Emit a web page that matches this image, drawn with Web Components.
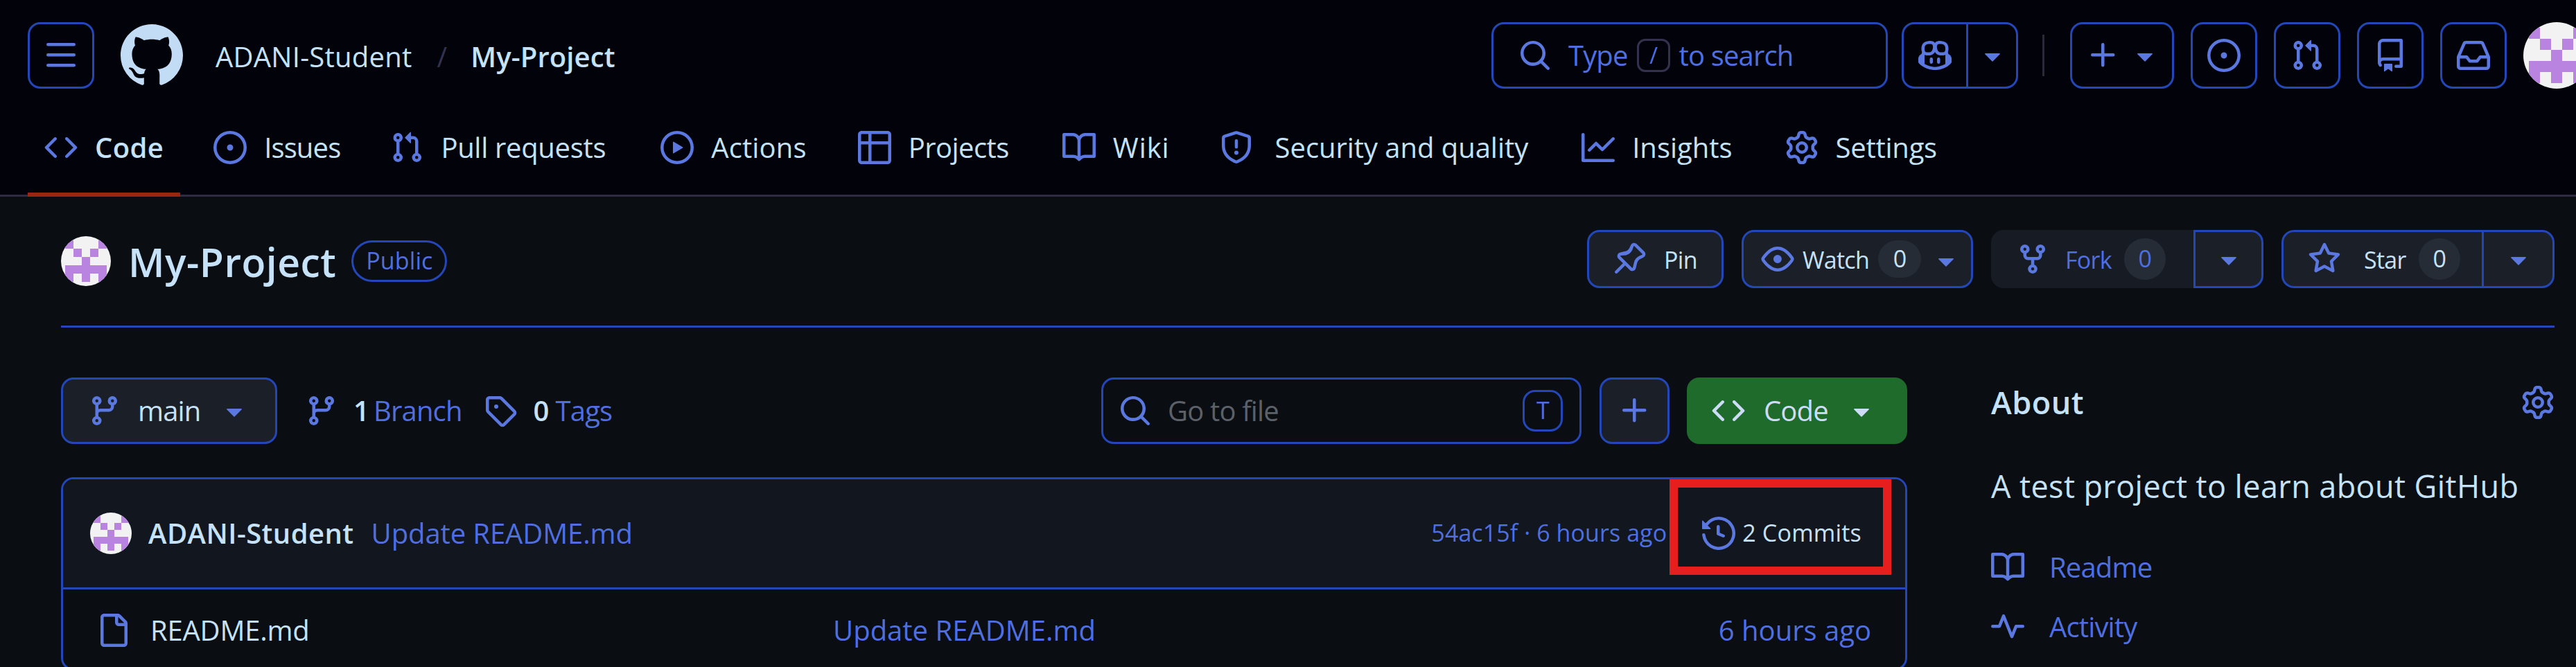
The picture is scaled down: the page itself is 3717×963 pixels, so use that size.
<!DOCTYPE html>
<html lang="en">
<head>
<meta charset="utf-8">
<title>My-Project</title>
<style>
  html, body { margin: 0; height: 100%; background: #0a0d12; overflow: hidden; }
  body {
    font: 40px/1.35 "Open Sans", "Noto Sans", sans-serif;
    letter-spacing: -0.85px;
    color: #c6e2f8;
    --blue: #4f6fe0;
    --icon: #5a78e0;
    --line: #2347b8;
    --dim: #34314f;
  }
  main-area { width: 3717px; }
</style>
</head>
<body>
<app-header></app-header>
<main-area></main-area>

<script>
// octicons, 16 unit grid
const ICONS = {
  bars: 'M1 2.75A.75.75 0 0 1 1.75 2h12.5a.75.75 0 0 1 0 1.5H1.75A.75.75 0 0 1 1 2.75Zm0 5A.75.75 0 0 1 1.75 7h12.5a.75.75 0 0 1 0 1.5H1.75A.75.75 0 0 1 1 7.75ZM1.75 12h12.5a.75.75 0 0 1 0 1.5H1.75a.75.75 0 0 1 0-1.5Z',
  github: 'M8 0c4.42 0 8 3.58 8 8a8.013 8.013 0 0 1-5.45 7.59c-.4.08-.55-.17-.55-.38 0-.27.01-1.13.01-2.2 0-.75-.25-1.23-.54-1.48 1.78-.2 3.65-.88 3.65-3.95 0-.88-.31-1.59-.82-2.15.08-.2.36-1.02-.08-2.12 0 0-.67-.22-2.2.82-.64-.18-1.32-.27-2-.27-.68 0-1.36.09-2 .27-1.53-1.03-2.2-.82-2.2-.82-.44 1.1-.16 1.92-.08 2.12-.51.56-.82 1.28-.82 2.15 0 3.06 1.86 3.75 3.64 3.95-.23.2-.44.55-.51 1.07-.46.21-1.61.55-2.33-.66-.15-.24-.6-.83-1.23-.82-.67.01-.27.38.01.53.34.19.73.9.82 1.13.16.45.68 1.31 2.69.94 0 .67.01 1.3.01 1.49 0 .21-.15.45-.55.37A7.995 7.995 0 0 1 0 8c0-4.42 3.58-8 8-8Z',
  code: 'm11.28 3.22 4.25 4.25a.75.75 0 0 1 0 1.06l-4.25 4.25a.749.749 0 0 1-1.275-.326.749.749 0 0 1 .215-.734L13.94 8l-3.72-3.72a.749.749 0 0 1 .326-1.275.749.749 0 0 1 .734.215Zm-6.56 0a.751.751 0 0 1 1.042.018.751.751 0 0 1 .018 1.042L2.06 8l3.72 3.72a.749.749 0 0 1-.326 1.275.749.749 0 0 1-.734-.215L.47 8.53a.75.75 0 0 1 0-1.06Z',
  issue: 'M8 9.5a1.5 1.5 0 1 0 0-3 1.5 1.5 0 0 0 0 3ZM8 0a8 8 0 1 1 0 16A8 8 0 0 1 8 0ZM1.5 8a6.5 6.5 0 1 0 13 0 6.5 6.5 0 0 0-13 0Z',
  pr: 'M1.5 3.25a2.25 2.25 0 1 1 3 2.122v5.256a2.251 2.251 0 1 1-1.5 0V5.372A2.25 2.25 0 0 1 1.5 3.25Zm5.677-.177L9.573.677A.25.25 0 0 1 10 .854V2.5h1A2.5 2.5 0 0 1 13.5 5v5.628a2.251 2.251 0 1 1-1.5 0V5a1 1 0 0 0-1-1h-1v1.646a.25.25 0 0 1-.427.177L7.177 3.427a.25.25 0 0 1 0-.354ZM3.75 2.5a.75.75 0 1 0 0 1.5.75.75 0 0 0 0-1.5Zm0 9.5a.75.75 0 1 0 0 1.5.75.75 0 0 0 0-1.5Zm8.25.75a.75.75 0 1 0 1.5 0 .75.75 0 0 0-1.5 0Z',
  play: 'M8 0a8 8 0 1 1 0 16A8 8 0 0 1 8 0ZM1.5 8a6.5 6.5 0 1 0 13 0 6.5 6.5 0 0 0-13 0Zm4.879-2.773 4.264 2.559a.25.25 0 0 1 0 .428l-4.264 2.559A.25.25 0 0 1 6 10.559V5.442a.25.25 0 0 1 .379-.215Z',
  table: 'M0 1.75C0 .784.784 0 1.75 0h12.5C15.216 0 16 .784 16 1.75v12.5A1.75 1.75 0 0 1 14.25 16H1.75A1.75 1.75 0 0 1 0 14.25ZM6.5 6.5v8h7.75a.25.25 0 0 0 .25-.25V6.5Zm8-1.5V1.75a.25.25 0 0 0-.25-.25H6.5V5Zm-13 1.5v7.75c0 .138.112.25.25.25H5v-8ZM5 5V1.5H1.75a.25.25 0 0 0-.25.25V5Z',
  book: 'M0 1.75A.75.75 0 0 1 .75 1h4.253c1.227 0 2.317.59 3 1.501A3.743 3.743 0 0 1 11.006 1h4.245a.75.75 0 0 1 .75.75v10.5a.75.75 0 0 1-.75.75h-4.507a2.25 2.25 0 0 0-1.591.659l-.622.621a.75.75 0 0 1-1.06 0l-.622-.621A2.25 2.25 0 0 0 5.258 13H.75a.75.75 0 0 1-.75-.75Zm7.251 10.324.004-5.073-.002-2.253A2.25 2.25 0 0 0 5.003 2.5H1.5v9h3.757a3.75 3.75 0 0 1 1.994.574ZM8.755 4.75l-.004 7.322a3.752 3.752 0 0 1 1.992-.572H14.5v-9h-3.495a2.25 2.25 0 0 0-2.25 2.25Z',
  shield: 'M7.467.133a1.748 1.748 0 0 1 1.066 0l5.25 1.68A1.75 1.75 0 0 1 15 3.48V7c0 1.566-.32 3.182-1.303 4.682-.983 1.498-2.585 2.813-5.032 3.855a1.697 1.697 0 0 1-1.33 0c-2.447-1.042-4.049-2.357-5.032-3.855C1.32 10.182 1 8.566 1 7V3.48a1.75 1.75 0 0 1 1.217-1.667Zm.61 1.429a.25.25 0 0 0-.153 0l-5.25 1.68a.25.25 0 0 0-.174.238V7c0 1.358.275 2.666 1.057 3.86.784 1.194 2.121 2.34 4.366 3.297a.196.196 0 0 0 .154 0c2.245-.956 3.582-2.104 4.366-3.298C13.225 9.666 13.5 8.36 13.5 7V3.48a.251.251 0 0 0-.174-.237l-5.25-1.68ZM8.75 4.75v3a.75.75 0 0 1-1.5 0v-3a.75.75 0 0 1 1.5 0ZM9 10.5a1 1 0 1 1-2 0 1 1 0 0 1 2 0Z',
  graph: 'M1.5 1.75V13.5h13.75a.75.75 0 0 1 0 1.5H.75a.75.75 0 0 1-.75-.75V1.75a.75.75 0 0 1 1.5 0Zm14.28 2.53-5.25 5.25a.75.75 0 0 1-1.06 0L7 7.06 4.28 9.78a.751.751 0 0 1-1.042-.018.751.751 0 0 1-.018-1.042l3.25-3.25a.75.75 0 0 1 1.06 0L10 7.94l4.72-4.72a.751.751 0 0 1 1.042.018.751.751 0 0 1 .018 1.042Z',
  gear: 'M8 0a8.2 8.2 0 0 1 .701.031C9.444.095 9.99.645 10.16 1.29l.288 1.107c.018.066.079.158.212.224.231.114.454.243.668.386.123.082.233.09.299.071l1.103-.303c.644-.176 1.392.021 1.82.63.27.385.506.792.704 1.218.315.675.111 1.422-.364 1.891l-.814.806c-.049.048-.098.147-.088.294.016.257.016.515 0 .772-.01.147.038.246.088.294l.814.806c.475.469.679 1.216.364 1.891a7.977 7.977 0 0 1-.704 1.217c-.428.61-1.176.807-1.82.63l-1.102-.302c-.067-.019-.177-.011-.3.071a5.909 5.909 0 0 1-.668.386c-.133.066-.194.158-.211.224l-.29 1.106c-.168.646-.715 1.196-1.458 1.26a8.006 8.006 0 0 1-1.402 0c-.743-.064-1.289-.614-1.458-1.26l-.289-1.106c-.018-.066-.079-.158-.212-.224a5.738 5.738 0 0 1-.668-.386c-.123-.082-.233-.09-.299-.071l-1.103.303c-.644.176-1.392-.021-1.82-.63a8.12 8.12 0 0 1-.704-1.218c-.315-.675-.111-1.422.363-1.891l.815-.806c.05-.048.098-.147.088-.294a6.214 6.214 0 0 1 0-.772c.01-.147-.038-.246-.088-.294l-.815-.806C.635 6.045.431 5.298.746 4.623a7.92 7.92 0 0 1 .704-1.217c.428-.61 1.176-.807 1.82-.63l1.102.302c.067.019.177.011.3-.071.214-.143.437-.272.668-.386.133-.066.194-.158.211-.224l.29-1.106C6.009.645 6.556.095 7.299.03 7.53.01 7.764 0 8 0Zm-.571 1.525c-.036.003-.108.036-.137.146l-.289 1.105c-.147.561-.549.967-.998 1.189-.173.086-.34.183-.5.29-.417.278-.97.423-1.529.27l-1.103-.303c-.109-.03-.175.016-.195.045-.22.312-.412.644-.573.99-.014.031-.021.11.059.19l.815.806c.411.406.562.957.53 1.456a4.709 4.709 0 0 0 0 .582c.032.499-.119 1.05-.53 1.456l-.815.806c-.081.08-.073.159-.059.19.162.346.353.677.573.989.02.03.085.076.195.046l1.102-.303c.56-.153 1.113-.008 1.53.27.161.107.328.204.501.29.447.222.85.629.997 1.189l.289 1.105c.029.109.101.143.137.146a6.6 6.6 0 0 0 1.142 0c.036-.003.108-.036.137-.146l.289-1.105c.147-.561.549-.967.998-1.189.173-.086.34-.183.5-.29.417-.278.97-.423 1.529-.27l1.103.303c.109.029.175-.016.195-.045.22-.313.411-.644.573-.99.014-.031.021-.11-.059-.19l-.815-.806c-.411-.406-.562-.957-.53-1.456a4.709 4.709 0 0 0 0-.582c-.032-.499.119-1.05.53-1.456l.815-.806c.081-.08.073-.159.059-.19a6.464 6.464 0 0 0-.573-.989c-.02-.03-.085-.076-.195-.046l-1.102.303c-.56.153-1.113.008-1.53-.27a4.44 4.44 0 0 0-.501-.29c-.447-.222-.85-.629-.997-1.189l-.289-1.105c-.029-.11-.101-.143-.137-.146a6.6 6.6 0 0 0-1.142 0ZM11 8a3 3 0 1 1-6 0 3 3 0 0 1 6 0ZM9.5 8a1.5 1.5 0 1 0-3.001.001A1.5 1.5 0 0 0 9.5 8Z',
  search: 'M10.68 11.74a6 6 0 0 1-7.922-8.982 6 6 0 0 1 8.982 7.922l3.04 3.04a.749.749 0 0 1-.326 1.275.749.749 0 0 1-.734-.215ZM11.5 7a4.499 4.499 0 1 0-8.997 0A4.499 4.499 0 0 0 11.5 7Z',
  copilot: 'M7.998 15.035c-4.562 0-7.873-2.914-7.998-3.749V9.338c.085-.628.677-1.686 1.588-2.065.013-.07.024-.143.036-.218.029-.183.06-.384.126-.612-.201-.508-.254-1.084-.254-1.656 0-.87.128-1.769.693-2.484.579-.733 1.494-1.124 2.724-1.261 1.206-.134 2.262.034 2.944.765.05.053.096.108.139.165.044-.057.094-.112.143-.165.682-.731 1.738-.899 2.944-.765 1.23.137 2.145.528 2.724 1.261.566.715.693 1.614.693 2.484 0 .572-.053 1.148-.254 1.656.066.228.098.429.126.612.012.076.024.148.037.218.924.385 1.522 1.471 1.591 2.095v1.872c0 .766-3.351 3.795-8.002 3.795Zm0-1.485c2.28 0 4.584-1.11 5.002-1.433V7.862l-.023-.116c-.49.21-1.075.291-1.727.291-1.146 0-2.059-.327-2.71-.991A3.222 3.222 0 0 1 8 6.303a3.24 3.24 0 0 1-.544.743c-.65.664-1.563.991-2.71.991-.652 0-1.236-.081-1.727-.291l-.023.116v4.255c.419.323 2.722 1.433 5.002 1.433ZM6.762 2.83c-.193-.206-.637-.413-1.682-.297-1.019.113-1.479.404-1.713.7-.247.312-.369.789-.369 1.554 0 .793.129 1.171.308 1.371.162.181.519.379 1.442.379.853 0 1.339-.235 1.638-.54.315-.322.527-.827.617-1.553.117-.935-.037-1.395-.241-1.614Zm4.155-.297c-1.044-.116-1.488.091-1.681.297-.204.219-.359.679-.242 1.614.091.726.303 1.231.618 1.553.299.305.784.54 1.638.54.922 0 1.28-.198 1.442-.379.179-.2.308-.578.308-1.371 0-.765-.123-1.242-.37-1.554-.233-.296-.693-.587-1.713-.7ZM6.25 9.037a.75.75 0 0 1 .75.75v1.501a.75.75 0 0 1-1.5 0V9.787a.75.75 0 0 1 .75-.75Zm4.25.75v1.501a.75.75 0 0 1-1.5 0V9.787a.75.75 0 0 1 1.5 0Z',
  plus: 'M7.75 2a.75.75 0 0 1 .75.75V7h4.25a.75.75 0 0 1 0 1.5H8.5v4.25a.75.75 0 0 1-1.5 0V8.5H2.75a.75.75 0 0 1 0-1.5H7V2.75A.75.75 0 0 1 7.75 2Z',
  caret: 'm4.427 7.427 3.396 3.396a.25.25 0 0 0 .354 0l3.396-3.396A.25.25 0 0 0 11.396 7H4.604a.25.25 0 0 0-.177.427Z',
  repo: 'M2 2.5A2.5 2.5 0 0 1 4.5 0h8.75a.75.75 0 0 1 .75.75v12.5a.75.75 0 0 1-.75.75h-2.5a.75.75 0 0 1 0-1.5h1.75v-2h-8a1 1 0 0 0-.714 1.7.75.75 0 1 1-1.072 1.05A2.495 2.495 0 0 1 2 11.5Zm10.5-1h-8a1 1 0 0 0-1 1v6.708A2.486 2.486 0 0 1 4.5 9h8ZM5 12.25a.25.25 0 0 1 .25-.25h3.5a.25.25 0 0 1 .25.25v3.25a.25.25 0 0 1-.4.2l-1.45-1.087a.249.249 0 0 0-.3 0L5.4 15.7a.25.25 0 0 1-.4-.2Z',
  inbox: 'M2.8 2.06A1.75 1.75 0 0 1 4.41 1h7.18c.7 0 1.333.417 1.61 1.06l2.74 6.395c.04.093.06.194.06.295v4.5A1.75 1.75 0 0 1 14.25 15H1.75A1.75 1.75 0 0 1 0 13.25v-4.5c0-.101.02-.202.06-.295Zm1.61.44a.25.25 0 0 0-.23.152L1.887 8H4.75a.75.75 0 0 1 .6.3L6.625 10h2.75l1.275-1.7a.75.75 0 0 1 .6-.3h2.863L11.82 2.652a.25.25 0 0 0-.23-.152Zm10.09 7h-2.875l-1.275 1.7a.75.75 0 0 1-.6.3h-3.5a.75.75 0 0 1-.6-.3L4.375 9.5H1.5v3.75c0 .138.112.25.25.25h12.5a.25.25 0 0 0 .25-.25Z',
  pin: 'M4.456.734a1.75 1.75 0 0 1 2.826.504l.613 1.327a3.081 3.081 0 0 0 2.084 1.707l2.454.584c1.332.317 1.8 1.972.832 2.94L11.06 10l3.72 3.72a.748.748 0 0 1-.332 1.265.75.75 0 0 1-.729-.205L10 11.06l-2.204 2.205c-.968.968-2.623.5-2.94-.832l-.584-2.454a3.081 3.081 0 0 0-1.707-2.084l-1.327-.613a1.75 1.75 0 0 1-.504-2.826ZM5.92 1.866a.25.25 0 0 0-.404-.072L1.794 5.516a.25.25 0 0 0 .072.404l1.328.613A4.582 4.582 0 0 1 5.73 9.63l.584 2.454a.25.25 0 0 0 .42.12l5.47-5.47a.25.25 0 0 0-.12-.42L9.63 6.13a4.583 4.583 0 0 1-3.098-2.537L5.92 1.866Z',
  eye: 'M8 2c1.981 0 3.671.992 4.933 2.078 1.27 1.091 2.187 2.345 2.637 3.023a1.62 1.62 0 0 1 0 1.798c-.45.678-1.367 1.932-2.637 3.023C11.67 13.008 9.981 14 8 14c-1.981 0-3.671-.992-4.933-2.078C1.797 10.83.88 9.576.43 8.898a1.62 1.62 0 0 1 0-1.798c.45-.677 1.367-1.931 2.637-3.022C4.33 2.992 6.019 2 8 2ZM1.679 7.932a.12.12 0 0 0 0 .136c.411.622 1.241 1.75 2.366 2.717C5.176 11.758 6.527 12.5 8 12.5c1.473 0 2.825-.742 3.955-1.715 1.124-.967 1.954-2.096 2.366-2.717a.12.12 0 0 0 0-.136c-.412-.621-1.242-1.75-2.366-2.717C10.824 4.242 9.473 3.5 8 3.5c-1.473 0-2.825.742-3.955 1.715-1.124.967-1.954 2.096-2.366 2.717ZM8 10a2 2 0 1 1-.001-3.999A2 2 0 0 1 8 10Z',
  fork: 'M5 5.372v.878c0 .414.336.75.75.75h4.5a.75.75 0 0 0 .75-.75v-.878a2.25 2.25 0 1 1 1.5 0v.878a2.25 2.25 0 0 1-2.25 2.25h-1.5v2.128a2.251 2.251 0 1 1-1.5 0V8.5h-1.5A2.25 2.25 0 0 1 3.5 6.25v-.878a2.25 2.25 0 1 1 1.5 0ZM5 3.25a.75.75 0 1 0-1.5 0 .75.75 0 0 0 1.5 0Zm6.75.75a.75.75 0 1 0 0-1.5.75.75 0 0 0 0 1.5Zm-3 8.75a.75.75 0 1 0-1.5 0 .75.75 0 0 0 1.5 0Z',
  star: 'M8 .25a.75.75 0 0 1 .673.418l1.882 3.815 4.21.612a.75.75 0 0 1 .416 1.279l-3.046 2.97.719 4.192a.751.751 0 0 1-1.088.791L8 12.347l-3.766 1.98a.75.75 0 0 1-1.088-.79l.72-4.194L.818 6.374a.75.75 0 0 1 .416-1.28l4.21-.611L7.327.668A.75.75 0 0 1 8 .25Zm0 2.445L6.615 5.5a.75.75 0 0 1-.564.41l-3.097.45 2.24 2.184a.75.75 0 0 1 .216.664l-.528 3.084 2.769-1.456a.75.75 0 0 1 .698 0l2.77 1.456-.53-3.084a.75.75 0 0 1 .216-.664l2.24-2.183-3.096-.45a.75.75 0 0 1-.564-.41L8 2.694Z',
  branch: 'M9.5 3.25a2.25 2.25 0 1 1 3 2.122V6A2.5 2.5 0 0 1 10 8.5H6a1 1 0 0 0-1 1v1.128a2.251 2.251 0 1 1-1.5 0V5.372a2.25 2.25 0 1 1 1.5 0v1.836A2.493 2.493 0 0 1 6 7h4a1 1 0 0 0 1-1v-.628A2.25 2.25 0 0 1 9.5 3.25Zm-6 0a.75.75 0 1 0 1.5 0 .75.75 0 0 0-1.5 0Zm8.25-.75a.75.75 0 1 0 0 1.5.75.75 0 0 0 0-1.5ZM4.25 12a.75.75 0 1 0 0 1.5.75.75 0 0 0 0-1.5Z',
  tag: 'M1 7.775V2.75C1 1.784 1.784 1 2.75 1h5.025c.464 0 .91.184 1.238.513l6.25 6.25a1.75 1.75 0 0 1 0 2.474l-5.026 5.026a1.75 1.75 0 0 1-2.474 0l-6.25-6.25A1.752 1.752 0 0 1 1 7.775Zm1.5 0c0 .066.026.13.073.177l6.25 6.25a.25.25 0 0 0 .354 0l5.025-5.025a.25.25 0 0 0 0-.354l-6.25-6.25a.25.25 0 0 0-.177-.073H2.75a.25.25 0 0 0-.25.25ZM6 5a1 1 0 1 1 0 2 1 1 0 0 1 0-2Z',
  history: 'm.427 1.927 1.215 1.215a8.002 8.002 0 1 1-1.6 5.685.75.75 0 1 1 1.493-.154 6.5 6.5 0 1 0 1.18-4.458l1.358 1.358A.25.25 0 0 1 3.896 6H.25A.25.25 0 0 1 0 5.75V2.104a.25.25 0 0 1 .427-.177ZM7.75 4a.75.75 0 0 1 .75.75v2.992l2.028.812a.75.75 0 0 1-.557 1.392l-2.5-1A.751.751 0 0 1 7 8.25v-3.5A.75.75 0 0 1 7.75 4Z',
  file: 'M2 1.75C2 .784 2.784 0 3.75 0h6.586c.464 0 .909.184 1.237.513l2.914 2.914c.329.328.513.773.513 1.237v9.586A1.75 1.75 0 0 1 13.25 16H3.75A1.75 1.75 0 0 1 2 14.25Zm1.75-.25a.25.25 0 0 0-.25.25v12.5c0 .138.112.25.25.25h9.5a.25.25 0 0 0 .25-.25V6h-2.75A1.75 1.75 0 0 1 9 4.25V1.5Zm6.75.062V4.25c0 .138.112.25.25.25h2.688l-.011-.013-2.914-2.914-.013-.011Z',
  pulse: 'M6 2c.306 0 .582.187.696.471L10 10.731l1.304-3.26A.751.751 0 0 1 12 7h3.25a.75.75 0 0 1 0 1.5h-2.742l-1.812 4.528a.751.751 0 0 1-1.392 0L6 4.77 4.696 8.03A.75.75 0 0 1 4 8.5H.75a.75.75 0 0 1 0-1.5h2.742l1.812-4.529A.751.751 0 0 1 6 2Z'
};

function svg(name, size = 48, extra = '') {
  return `<svg width="${size}" height="${size}" viewBox="0 0 16 16" fill="currentColor" fill-rule="evenodd" style="flex:none;display:block;${extra}"><path d="${ICONS[name]}"/></svg>`;
}

class GhAvatar extends HTMLElement {
  connectedCallback() {
    const size = this.getAttribute('size') || 72;
    this.attachShadow({ mode: 'open' });
    this.shadowRoot.innerHTML = `
      <style>
        :host { display: block; width: ${size}px; height: ${size}px; border-radius: 50%; overflow: hidden; flex: none; }
        svg { display: block; width: 100%; height: 100%; }
      </style>
      <svg viewBox="0 0 12 12" shape-rendering="crispEdges">
        <rect width="12" height="12" fill="#f2f2f2"/>
        <path fill="#b983e0" d="M1 1h2v2H1ZM9 1h2v2H9ZM3 3h2v2H3ZM7 3h2v2H7ZM5 5h2v2H5ZM1 7h10v2H1ZM1 9h2v2H1ZM5 9h2v2H5ZM9 9h2v2H9Z"/>
      </svg>`;
  }
}
customElements.define('gh-avatar', GhAvatar);

class NavTab extends HTMLElement {
  connectedCallback() {
    this.attachShadow({ mode: 'open' });
    this.shadowRoot.innerHTML = `
      <style>
        :host { display: flex; align-items: center; gap: 25px; padding: 0 24px; position: relative; color: #c6e2f8; }
        :host([selected]) { font-weight: 600; }
        :host([selected])::after { content: ""; position: absolute; left: 0; right: 0; bottom: 0; height: 6px; background: #9a2511; }
        .i { color: var(--icon); }
      </style>
      <span class="i">${svg(this.getAttribute('icon'))}</span><slot></slot>`;
  }
}
customElements.define('nav-tab', NavTab);

class IconBtn extends HTMLElement {
  connectedCallback() {
    this.attachShadow({ mode: 'open' });
    this.shadowRoot.innerHTML = `
      <style>
        :host { display: flex; align-items: center; justify-content: center; box-sizing: border-box; width: 96px; height: 96px; border: 3px solid var(--line); border-radius: 18px; color: var(--icon); flex: none; }
      </style>
      ${svg(this.getAttribute('icon'))}`;
  }
}
customElements.define('icon-btn', IconBtn);

class AppHeader extends HTMLElement {
  connectedCallback() {
    this.attachShadow({ mode: 'open' });
    this.shadowRoot.innerHTML = `
      <style>
        :host { display: block; box-sizing: border-box; height: 284px; padding: 32px 0 0 40px; background: #02030a; border-bottom: 3px solid #2e2b45; }
        .top { display: flex; align-items: center; height: 96px; margin-right: -20px; }
        .logo { color: #c3dcf5; margin: 0 47px 0 38px; }
        .owner { letter-spacing: 0.25px; margin-top: 4px; }
        .slash { color: var(--dim); margin: 4px 35px 0 36px; }
        .repo { font-weight: 600; letter-spacing: 0.1px; margin-top: 4px; }
        .search { display: flex; align-items: center; box-sizing: border-box; width: 572px; height: 96px; margin-left: auto; padding-left: 36px; border: 3px solid var(--line); border-radius: 18px; color: var(--blue); }
        .search svg { margin-right: 24px; color: var(--icon); }
        .kbd { display: flex; align-items: center; justify-content: center; box-sizing: border-box; width: 48px; height: 48px; margin: 0 13px; border: 3px solid var(--dim); border-radius: 12px; font-size: 32px; }
        .group { display: flex; align-items: stretch; box-sizing: border-box; height: 96px; border: 3px solid var(--line); border-radius: 18px; color: var(--icon); }
        .group > div { display: flex; align-items: center; justify-content: center; }
        .copilot { width: 168px; margin-left: 20px; }
        .copilot > div:first-child { width: 90px; border-right: 3px solid var(--line); }
        .copilot > div:last-child { flex: 1; }
        .sep { width: 3px; height: 60px; background: #262a3c; margin: 0 37px 0 35px; }
        .plus { width: 150px; padding: 0 15px 0 21px; }
        .plus > div { gap: 12px; }
        .rest { display: flex; gap: 24px; margin-left: 24px; align-items: center; }
        nav { display: flex; gap: 24px; height: 142px; margin-top: 14px; }
      </style>
      <div class="top">
        <icon-btn icon="bars"></icon-btn>
        <span class="logo">${svg('github', 90)}</span>
        <span class="owner">ADANI-Student</span>
        <span class="slash">/</span>
        <span class="repo">My-Project</span>
        <div class="search">${svg('search')}<span>Type</span><span class="kbd">/</span><span>to search</span></div>
        <div class="group copilot"><div>${svg('copilot')}</div><div>${svg('caret')}</div></div>
        <div class="sep"></div>
        <div class="group plus"><div>${svg('plus')}${svg('caret')}</div></div>
        <div class="rest">
          <icon-btn icon="issue"></icon-btn>
          <icon-btn icon="pr"></icon-btn>
          <icon-btn icon="repo"></icon-btn>
          <icon-btn icon="inbox"></icon-btn>
          <gh-avatar size="96"></gh-avatar>
        </div>
      </div>
      <nav>
        <nav-tab icon="code" selected style="letter-spacing:.35px">Code</nav-tab>
        <nav-tab icon="issue">Issues</nav-tab>
        <nav-tab icon="pr" style="letter-spacing:-.31px">Pull requests</nav-tab>
        <nav-tab icon="play" style="letter-spacing:.15px;margin-left:7px">Actions</nav-tab>
        <nav-tab icon="table" style="letter-spacing:-.55px;margin-left:2px">Projects</nav-tab>
        <nav-tab icon="book" style="letter-spacing:.9px;margin-left:5px">Wiki</nav-tab>
        <nav-tab icon="shield" style="letter-spacing:-.05px;gap:32px">Security and quality</nav-tab>
        <nav-tab icon="graph" style="letter-spacing:0;margin-left:5px">Insights</nav-tab>
        <nav-tab icon="gear" style="letter-spacing:-.25px;margin-left:4px">Settings</nav-tab>
      </nav>`;
  }
}
customElements.define('app-header', AppHeader);

class RepoHead extends HTMLElement {
  connectedCallback() {
    this.attachShadow({ mode: 'open' });
    const caret = svg('caret');
    this.shadowRoot.innerHTML = `
      <style>
        :host { display: flex; align-items: center; box-sizing: border-box; height: 189px; padding: 48px 0 54px; border-bottom: 3px solid var(--line); font-size: 34px; letter-spacing: -0.7px; }
        gh-avatar { margin-top: 6px; }
        h1 { margin: 0 22px 0 25px; font-size: 57px; font-weight: 600; letter-spacing: .5px; line-height: 1; padding-top: 8px; }
        .label { display: flex; align-items: center; box-sizing: border-box; width: 138px; height: 60px; margin-top: 6px; justify-content: center; border: 3px solid var(--line); border-radius: 30px; color: var(--blue); letter-spacing: .1px; }
        .actions { display: flex; gap: 26px; margin-left: auto; }
        .btn { display: flex; box-sizing: border-box; height: 84px; background: #1a1f28; border: 3px solid var(--line); border-radius: 18px; color: #c6e2f8; }
        .btn svg { color: var(--icon); }
        .main { display: flex; align-items: center; flex: 1; }
        .main > span:not(.count), .fork-left > span:not(.count) { padding-top: 3px; }
        .drop { display: flex; align-items: center; justify-content: center; border-left: 3px solid var(--line); }
        .count { display: flex; align-items: center; justify-content: center; width: 60px; height: 60px; border-radius: 30px; background: #262c36; }
        .fork-wrap { display: flex; height: 84px; }
        .fork-left { display: flex; align-items: center; box-sizing: border-box; width: 292px; padding-left: 36px; background: #171c24; border-radius: 18px 0 0 18px; color: var(--blue); }
        .fork-right { display: flex; align-items: center; justify-content: center; box-sizing: border-box; width: 101px; background: #1a1f28; border: 3px solid var(--line); border-radius: 0 18px 18px 0; color: var(--icon); }
      </style>
      <gh-avatar size="72"></gh-avatar>
      <h1>My-Project</h1>
      <span class="label">Public</span>
      <div class="actions">
        <div class="btn" style="width:197px"><div class="main" style="padding-left:34px;gap:26px">${svg('pin', 48, 'transform:scaleX(-1)')}<span>Pin</span></div></div>
        <div class="btn" style="width:334px"><div class="main" style="padding-left:25px">${svg('eye')}<span style="margin:0 13px 0 12px">Watch</span><span class="count" style="width:62px;height:54px">0</span><span class="i" style="margin-left:12px">${caret}</span></div></div>
        <div class="fork-wrap">
          <div class="fork-left">${svg('fork', 48, 'color:var(--icon)')}<span style="margin:0 18px 0 23px">Fork</span><span class="count">0</span></div>
          <div class="fork-right">${caret}</div>
        </div>
        <div class="btn" style="width:394px"><div class="main" style="padding-left:35px">${svg('star')}<span style="margin:0 18px 0 33px">Star</span><span class="count">0</span></div><div class="drop" style="width:99px">${caret}</div></div>
      </div>`;
  }
}
customElements.define('repo-head', RepoHead);

class FileBrowser extends HTMLElement {
  connectedCallback() {
    this.attachShadow({ mode: 'open' });
    this.shadowRoot.innerHTML = `
      <style>
        :host { display: block; width: 2664px; flex: none; }
        a { color: var(--blue); text-decoration: none; }
        svg { color: var(--icon); }
        .bar { display: flex; align-items: center; height: 96px; }
        .branch { display: flex; align-items: center; gap: 24px; box-sizing: border-box; width: 312px; height: 96px; padding-left: 36px; background: #1a1f28; border: 3px solid var(--line); border-radius: 18px; }
        .stat { display: flex; align-items: center; }
        .stat b { font-weight: 600; color: #c6e2f8; }
        .find { display: flex; align-items: center; box-sizing: border-box; width: 693px; height: 96px; margin-left: auto; padding: 0 24px 0 22px; border: 3px solid var(--line); border-radius: 18px; color: #5c6068; }
        .find svg { margin-right: 23px; }
        .key { display: flex; align-items: center; justify-content: center; box-sizing: border-box; width: 58px; height: 60px; margin-left: auto; border: 3px solid var(--line); border-radius: 18px; color: var(--blue); font-size: 34px; }
        .add { display: flex; align-items: center; justify-content: center; box-sizing: border-box; width: 101px; height: 96px; margin: 0 25px 0 26px; background: #1a1f28; border: 3px solid var(--line); border-radius: 18px; }
        .green { display: flex; align-items: center; box-sizing: border-box; width: 318px; height: 96px; padding-left: 36px; background: #1e6b2c; border-radius: 18px; color: #cfdcf7; font-weight: 500; }
        .green svg { color: #cfdcf7; }
        .box { position: relative; box-sizing: border-box; margin-top: 48px; height: 279px; border: 3px solid var(--line); border-radius: 18px; overflow: hidden; }
        .head { display: flex; align-items: center; box-sizing: border-box; height: 159px; padding: 0 63px 0 39px; background: #12161e; border-bottom: 3px solid var(--line); }
        .author { font-weight: 600; margin: 0 25px 0 24px; letter-spacing: .43px; }
        .head > a { letter-spacing: -.1px; }
        .meta { display: flex; align-items: center; margin-left: auto; font-size: 34px; letter-spacing: .08px; }
        .commits { display: flex; align-items: center; gap: 10px; position: relative; margin-left: 51px; letter-spacing: .2px; }
        .mark { position: absolute; left: -47px; right: -43px; top: -54px; bottom: -36px; border: 12px solid #e61e1e; }
        .row { display: grid; grid-template-columns: 1063px 1fr auto; align-items: center; height: 114px; padding: 4px 49px 0 48px; box-sizing: border-box; letter-spacing: 0; }
        .name { display: flex; align-items: center; gap: 30px; letter-spacing: -.2px; }
      </style>
      <div class="bar">
        <div class="branch">${svg('branch')}<span>main</span>${svg('caret')}</div>
        <a class="stat" style="margin-left:40px">${svg('branch', 48, 'margin-right:22px')}<b style="margin-right:7px">1</b>Branch</a>
        <a class="stat" style="margin-left:31px">${svg('tag', 48, 'margin-right:24px')}<b style="margin-right:10px">0</b>Tags</a>
        <div class="find">${svg('search')}<span>Go to file</span><span class="key">T</span></div>
        <div class="add">${svg('plus')}</div>
        <div class="green">${svg('code')}<span style="margin:0 24px 0 27px">Code</span>${svg('caret')}</div>
      </div>
      <div class="box">
        <div class="head">
          <gh-avatar size="60"></gh-avatar>
          <span class="author">ADANI-Student</span>
          <a>Update README.md</a>
          <div class="meta">
            <a>54ac15f · 6 hours ago</a>
            <span class="commits">${svg('history')}<span>2 Commits</span><span class="mark"></span></span>
          </div>
        </div>
        <div class="row">
          <span class="name">${svg('file')}<span>README.md</span></span>
          <a>Update README.md</a>
          <a>6 hours ago</a>
        </div>
      </div>`;
  }
}
customElements.define('file-browser', FileBrowser);

class AboutSide extends HTMLElement {
  connectedCallback() {
    this.attachShadow({ mode: 'open' });
    this.shadowRoot.innerHTML = `
      <style>
        :host { display: block; flex: 1; }
        a { color: var(--blue); text-decoration: none; display: flex; align-items: center; gap: 36px; height: 48px; margin-bottom: 38px; }
        svg { color: var(--icon); }
        .title { display: flex; align-items: center; justify-content: space-between; height: 48px; margin-top: 12px; }
        h2 { margin: 0; font-size: 45px; font-weight: 600; letter-spacing: .5px; line-height: 48px; }
        p { margin: 70px 0 66px; font-size: 45px; letter-spacing: .4px; line-height: 54px; white-space: nowrap; }
      </style>
      <div class="title"><h2>About</h2>${svg('gear')}</div>
      <p>A test project to learn about GitHub</p>
      <a>${svg('book')}Readme</a>
      <a>${svg('pulse')}Activity</a>`;
  }
}
customElements.define('about-side', AboutSide);

class MainArea extends HTMLElement {
  connectedCallback() {
    this.attachShadow({ mode: 'open' });
    this.shadowRoot.innerHTML = `
      <style>
        :host { display: block; box-sizing: border-box; padding: 0 31px 0 88px; }
        .cols { display: flex; gap: 121px; margin-top: 72px; }
      </style>
      <repo-head></repo-head>
      <div class="cols">
        <file-browser></file-browser>
        <about-side></about-side>
      </div>`;
  }
}
customElements.define('main-area', MainArea);
</script>
</body>
</html>
